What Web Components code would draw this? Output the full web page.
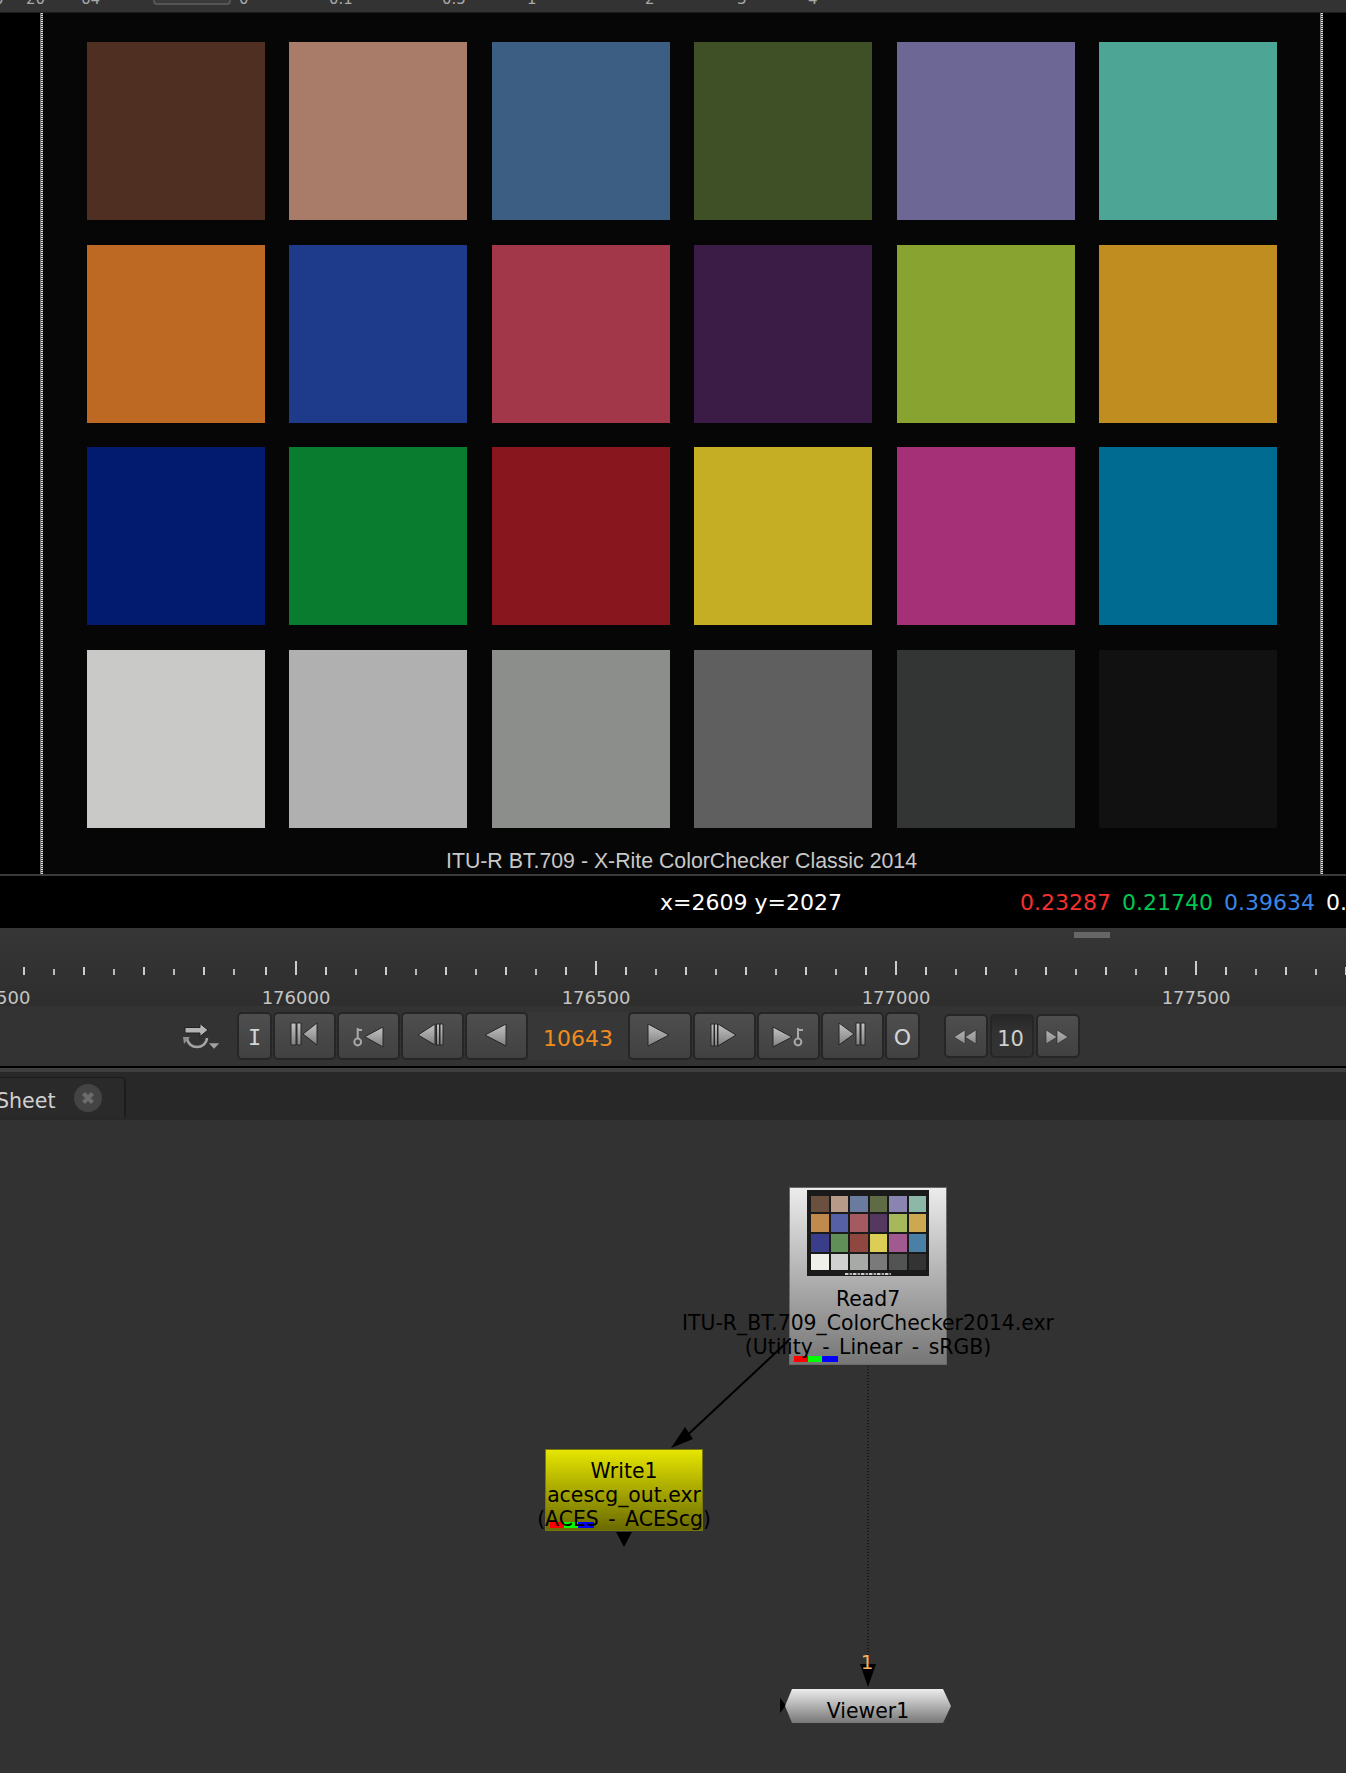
<!DOCTYPE html>
<html>
<head>
<meta charset="utf-8">
<title>Nuke viewer</title>
<style>
    html, body { margin: 0; background: #323232; }
    body { width: 1346px; height: 1773px; overflow: hidden; font-family: "DejaVu Sans", sans-serif; }
    nk-graph { height: 653px; }
</style>
</head>
<body>
<nk-top-strip></nk-top-strip>
<nk-viewer></nk-viewer>
<nk-info></nk-info>
<nk-ruler></nk-ruler>
<nk-transport></nk-transport>
<nk-tabs></nk-tabs>
<nk-graph></nk-graph>

<script>
class NkTopStrip extends HTMLElement {
    constructor() {
        super();
        this.attachShadow({ mode: 'open' });
        const marks = [['0', 32, -6], ['20', 55], ['64', 72], ['', 86], ['0', 90], ['0.1', 113], ['0.5', 85], ['1', 118], ['2', 92], ['3', 71], ['4', 30]];
        this.shadowRoot.innerHTML = `
            <style>
                :host {
                    display: flex;
                    height: 12px;
                    background: #333;
                    border-bottom: 1px solid #1c1c1c;
                    overflow: hidden;
                    color: #a8a8a8;
                    font: 15px/16px "DejaVu Sans", sans-serif;
                }
                span { flex: none; margin-top: -9px; height: 16px; }
                .slider {
                    box-sizing: border-box;
                    flex: none;
                    width: 78px;
                    height: 20px;
                    margin: -15px 8px 0 0;
                    border: 2px solid #555;
                    border-radius: 4px;
                    background: #3a3a3a;
                }
            </style>
            ${marks.map(([t, w, m]) => t
                ? `<span style="width:${w}px;${m ? `margin-left:${m}px` : ''}">${t}</span>`
                : `<div class="slider"></div>`).join('')}
        `;
    }
}

const CHART = [
    '#502f23', '#a87c69', '#3c5e82', '#3f5026', '#6c6795', '#4ca595',
    '#bd6823', '#1e3a8a', '#a13748', '#3b1c46', '#89a330', '#bf8d20',
    '#021b6f', '#0a7c30', '#87161e', '#c6ae24', '#a53078', '#006b90',
    '#c9c9c7', '#b0b0b0', '#8c8e8c', '#5f5f5f', '#333534', '#111111'
];

class NkViewer extends HTMLElement {
    constructor() {
        super();
        this.attachShadow({ mode: 'open' });
        this.shadowRoot.innerHTML = `
            <style>
                :host {
                    display: flex;
                    height: 861px;
                    background: #000;
                    border-bottom: 2px solid #3a3a3a;
                }
                .edge {
                    flex: none;
                    width: 2px;
                    border-left: 1px solid #777;
                    background: repeating-linear-gradient(#e0e0e0 0 1px, #444 1px 2px);
                }
                .left { width: 40px; flex: none; }
                .chart {
                    flex: none;
                    width: 1277px;
                    background: #060606;
                    padding: 29px 0 0 44px;
                    box-sizing: border-box;
                }
                .grid {
                    display: grid;
                    grid-template-columns: repeat(6, 178px);
                    grid-auto-rows: 178px;
                    column-gap: 24.4px;
                    row-gap: 24.5px;
                }
                .caption {
                    margin: 21px 0 0 -44px;
                    width: 1277px;
                    text-align: center;
                    color: #c8c8c8;
                    font: 21.3px/24px "Liberation Sans", Arial, sans-serif;
                    white-space: nowrap;
                }
            </style>
            <div class="left"></div>
            <div class="edge"></div>
            <div class="chart">
                <div class="grid">${CHART.map(c => `<div style="background:${c}"></div>`).join('')}</div>
                <div class="caption">ITU-R BT.709 - X-Rite ColorChecker Classic 2014</div>
            </div>
            <div class="edge"></div>
        `;
    }
}

class NkInfo extends HTMLElement {
    constructor() {
        super();
        this.attachShadow({ mode: 'open' });
        this.shadowRoot.innerHTML = `
            <style>
                :host {
                    display: flex;
                    align-items: center;
                    box-sizing: border-box;
                    height: 52px;
                    padding: 2px 0 0 660px;
                    background: #000;
                    overflow: hidden;
                    color: #fff;
                    font: 22px/26px "DejaVu Sans", sans-serif;
                    white-space: nowrap;
                }
                .pos { flex: none; width: 360px; }
                .val { flex: none; width: 102px; }
                .r { color: #f5302f; }
                .g { color: #00c853; }
                .b { color: #3a86e8; }
            </style>
            <span class="pos">x=2609 y=2027</span>
            <span class="val r">0.23287</span>
            <span class="val g">0.21740</span>
            <span class="val b">0.39634</span>
            <span class="val">0.</span>
        `;
    }
}

class NkRuler extends HTMLElement {
    constructor() {
        super();
        this.attachShadow({ mode: 'open' });
        let ticks = '';
        // left of the first major mark the spacing is offset by 2px
        for (let x = 24; x <= 234; x += 30) {
            const med = (x - 24) % 60 === 0;
            ticks += `<i class="${med ? 'm' : 's'}" style="width:${x === 234 ? 32 : 30}px"></i>`;
        }
        for (let x = 266; x <= 1346; x += 30) {
            const k = (x - 296) / 30;
            const cls = k % 10 === 0 ? 'l' : (Math.abs(k) % 2 === 1 ? 'm' : 's');
            ticks += `<i class="${cls}" style="width:30px"></i>`;
        }
        const labels = ['175500', '176000', '176500', '177000', '177500'];
        this.shadowRoot.innerHTML = `
            <style>
                :host {
                    display: block;
                    height: 78px;
                    background: linear-gradient(#363636, #2e2e2e);
                    overflow: hidden;
                    color: #c4c4c4;
                    font: 18px/18px "DejaVu Sans", sans-serif;
                }
                .handle { width: 36px; height: 6px; margin: 4px 0 23px 1074px; background: #666; }
                .ticks { display: flex; align-items: flex-end; height: 14px; padding-left: 23px; }
                i { flex: none; box-sizing: border-box; display: block; }
                i::before { content: ""; display: block; width: 2px; background: #ccc; }
                i.s::before { height: 6px; background: #bbb; }
                i.m::before { height: 8px; }
                i.l::before { height: 14px; }
                .labels { display: flex; margin: 14px 0 0 -154px; width: 1800px; }
                .labels span { flex: none; width: 300px; text-align: center; }
            </style>
            <div class="handle"></div>
            <div class="ticks">${ticks}</div>
            <div class="labels">${labels.map(l => `<span>${l}</span>`).join('')}</div>
        `;
    }
}

const ICONS = {
    first: '<path d="M18 10h5v22h-5zM24 10h4v22h-4z"/><path d="M30 21 44 10v22z"/>',
    keyback: '<path class="key" d="M20.7 25V15M20.7 17H25"/><circle class="key" cx="20.7" cy="29" r="3.4"/><path d="M27.7 23.7 46 14v20z"/>',
    stepback: '<path d="M17 22 34 11v21z"/><path d="M35.5 11h3v21h-3zM39 11h3v21h-3z"/>',
    back: '<path d="M20 22 41 11v22z"/>',
    play: '<path d="M20 11 41 22 20 33z"/>',
    stepfwd: '<path d="M18 11h3v22h-3zM21.5 11h3v22h-3z"/><path d="M25 11 43 22 25 33z"/>',
    keyfwd: '<path d="M16 14 35 24 16 34z"/><path class="key" d="M41 25V15M41 17H46"/><circle class="key" cx="41" cy="29" r="3.4"/>',
    last: '<path d="M18 10 33 21 18 32z"/><path d="M35 10h4v22h-4zM40 10h4v22h-4z"/>',
    rew: '<path d="M10 22 21 15v14zM21 22 32 15v14z"/>',
    fwd: '<path d="M10 15 21 22 10 29zM21 15 32 22 21 29z"/>'
};

class NkBtn extends HTMLElement {
    constructor() {
        super();
        this.attachShadow({ mode: 'open' });
        const icon = this.getAttribute('icon');
        const dim = icon === 'rew' || icon === 'fwd';
        const w = parseInt(this.getAttribute('w'), 10);
        const h = dim ? 44 : 48;
        this.shadowRoot.innerHTML = `
            <style>
                :host {
                    display: flex;
                    flex: none;
                    box-sizing: border-box;
                    align-items: center;
                    justify-content: center;
                    border: 2px solid #262626;
                    border-radius: 5px;
                    background: linear-gradient(#4e4e4e, #414141);
                    color: #d4d4d4;
                    font: 22px/24px "DejaVu Sans", sans-serif;
                }
                slot { display: block; padding-top: 3px; }
                svg { display: block; flex: none; margin: -1px -2px -3px; }
                .key { fill: none; stroke: #a8a8a8; stroke-width: 2; }
                path:not(.key) { fill: url(#g); stroke: #262626; stroke-width: ${dim ? 0.6 : 1}; }
            </style>
            ${icon ? `<svg width="${w}" height="${h}" viewBox="0 0 ${w} ${h}">
                <defs><linearGradient id="g" x1="0" y1="0" x2="0" y2="1">
                    <stop offset="0" stop-color="${dim ? '#b4b4b4' : '#c4c4c4'}"/>
                    <stop offset="1" stop-color="${dim ? '#8a8a8a' : '#808080'}"/>
                </linearGradient></defs>${ICONS[icon]}</svg>` : '<slot></slot>'}
        `;
        this.style.width = w + 'px';
        this.style.height = h + 'px';
        if (dim) this.style.marginTop = '2px';
    }
}

class NkTransport extends HTMLElement {
    constructor() {
        super();
        this.attachShadow({ mode: 'open' });
        this.shadowRoot.innerHTML = `
            <style>
                :host {
                    display: flex;
                    align-items: flex-start;
                    box-sizing: border-box;
                    height: 60px;
                    padding: 6px 0 0 182px;
                    background: #333;
                }
                .loop { flex: none; display: block; margin: 11px 17px 0 0; }
                .mono { font-family: "DejaVu Sans Mono", monospace; }
                .frame {
                    flex: none;
                    width: 100px;
                    height: 48px;
                    text-align: center;
                    background: #373737;
                    color: #f08c1e;
                    font: 22px/54px "DejaVu Sans", sans-serif;
                }
                nk-btn + nk-btn { margin-left: 1px; }
                .gap { flex: none; width: 24px; }
                .step {
                    flex: none;
                    box-sizing: border-box;
                    width: 44px;
                    height: 44px;
                    margin: 2px 2px 0 2px;
                    padding-right: 3px;
                    border: 2px solid #262626;
                    border-radius: 5px;
                    background: linear-gradient(#272727, #323232 40%);
                    color: #cfcfcf;
                    text-align: center;
                    font: 21px/46px "DejaVu Sans", sans-serif;
                }
            </style>
            <svg class="loop" width="38" height="26" viewBox="0 0 38 26">
                <path d="M3 4.5h15V0.5L26 7l-8 6.5V10H3z" fill="#b4b4b4" stroke="#222" stroke-width="1"/>
                <path d="M5 15c1 12 19 12 20 0" fill="none" stroke="#a4a4a4" stroke-width="2.6"/>
                <path d="M1 14h7l-6 7z" fill="#8e8e8e"/>
                <path d="M27 20.3h10.3L32 25.7z" fill="#a0a0a0"/>
            </svg>
            <nk-btn w="35"><span class="mono">I</span></nk-btn>
            <nk-btn icon="first" w="63"></nk-btn>
            <nk-btn icon="keyback" w="63"></nk-btn>
            <nk-btn icon="stepback" w="63"></nk-btn>
            <nk-btn icon="back" w="63"></nk-btn>
            <div class="frame">10643</div>
            <nk-btn icon="play" w="64"></nk-btn>
            <nk-btn icon="stepfwd" w="63"></nk-btn>
            <nk-btn icon="keyfwd" w="63"></nk-btn>
            <nk-btn icon="last" w="63"></nk-btn>
            <nk-btn w="35">O</nk-btn>
            <div class="gap"></div>
            <nk-btn icon="rew" w="44"></nk-btn>
            <div class="step">10</div>
            <nk-btn icon="fwd" w="44"></nk-btn>
        `;
    }
}

class NkTabs extends HTMLElement {
    constructor() {
        super();
        this.attachShadow({ mode: 'open' });
        this.shadowRoot.innerHTML = `
            <style>
                :host {
                    display: block;
                    height: 54px;
                    box-sizing: border-box;
                    background: #000;
                    padding-top: 2px;
                    overflow: hidden;
                }
                .rule { height: 4px; background: #3f3f3f; }
                .bar { box-sizing: border-box; height: 48px; padding-top: 5px; background: #282828; }
                .tab {
                    box-sizing: border-box;
                    display: flex;
                    align-items: center;
                    width: 126px;
                    height: 40px;
                    background: #2a2a2a;
                    border: 1px solid #1c1c1c;
                    border-width: 1px 2px 0 0;
                    border-radius: 0 5px 0 0;
                    color: #d0d0d0;
                    font: 20.6px/24px "DejaVu Sans", sans-serif;
                }
                .tab span { flex: none; margin: 6px 0 0 -4px; width: 78px; }
                svg { display: block; flex: none; margin-top: 1px; }
            </style>
            <div class="rule"></div>
            <div class="bar">
                <div class="tab">
                    <span>Sheet</span>
                    <svg width="28" height="28" viewBox="0 0 28 28">
                        <circle cx="14" cy="14" r="14" fill="#444"/>
                        <path d="M9.5 9.5l9 9M18.5 9.5l-9 9" stroke="#6c6c6c" stroke-width="4"/>
                    </svg>
                </div>
            </div>
        `;
    }
}

const THUMB = [
    '#6b5040', '#b89a88', '#6b7ba0', '#5f6b45', '#8a85b0', '#8cb8a8',
    '#c08a4c', '#5560a5', '#a55a62', '#553860', '#a5b85c', '#cca850',
    '#3a3d8a', '#609058', '#8e4840', '#dccd55', '#a05a90', '#4a80a5',
    '#f0f0ea', '#d0d0d0', '#a8aaa8', '#7a7a7a', '#525454', '#333333'
];

class NkThumb extends HTMLElement {
    constructor() {
        super();
        this.attachShadow({ mode: 'open' });
        this.shadowRoot.innerHTML = `
            <style>
                :host {
                    display: block;
                    box-sizing: border-box;
                    width: 122px;
                    height: 86px;
                    padding: 6px 4px 0;
                    background: #1a1a1a;
                }
                .grid {
                    display: grid;
                    grid-template-columns: repeat(6, 17.5px);
                    grid-template-rows: 16px 18px 18px 16px;
                    column-gap: 2px;
                    row-gap: 2px;
                }
                .noise {
                    width: 46px;
                    height: 2px;
                    margin: 3px 0 0 34px;
                    background: repeating-linear-gradient(90deg, #ccc 0 3px, #666 3px 5px, #aaa 5px 7px, #333 7px 8px);
                }
            </style>
            <div class="grid">${THUMB.map(c => `<div style="background:${c}"></div>`).join('')}</div>
            <div class="noise"></div>
        `;
    }
}

class NkNode extends HTMLElement {
    constructor() {
        super();
        this.attachShadow({ mode: 'open' });
        this.shadowRoot.innerHTML = `
            <style>
                :host {
                    display: block;
                    position: absolute;
                    box-sizing: border-box;
                    border: 1px solid #6a6a6a;
                    background: linear-gradient(#ececec, #767676);
                    color: #000;
                    font: 20.4px/24px "DejaVu Sans", sans-serif;
                    word-spacing: 3px;
                }
                :host([kind="write"]) {
                    border-color: #77770a;
                    background: linear-gradient(#e6e600, #6a6a00);
                }
                :host([kind="viewer"]) {
                    border: 0;
                    background: linear-gradient(#ececec, #777);
                    clip-path: polygon(0 50%, 7px 0, calc(100% - 8px) 0, 100% 50%, calc(100% - 8px) 100%, 7px 100%);
                }
                .thumb { display: flex; justify-content: center; margin: 2px 0 11px; }
                .bars { display: flex; position: absolute; left: 4px; bottom: 2px; height: 6px; }
                .bars i { display: block; width: 14px; }
                .bars i:nth-child(3) { width: 16px; }
                .label {
                    position: relative;
                    display: flex;
                    flex-direction: column;
                    align-items: center;
                    white-space: nowrap;
                }
                :host([kind="write"]) .label { padding-top: 9px; }
                :host([kind="viewer"]) .label { padding-top: 10px; }
                ::slotted(span) { display: block; }
            </style>
            <div class="thumb"><slot name="thumb"></slot></div>
            <div class="bars" part="bars"></div>
            <div class="label"><slot></slot></div>
        `;
        if (this.hasAttribute('bars')) {
            this.shadowRoot.querySelector('.bars').innerHTML =
                '<i style="background:#f00"></i><i style="background:#0f0"></i><i style="background:#00f"></i>';
        }
        if (this.getAttribute('kind') !== 'read') {
            this.shadowRoot.querySelector('.thumb').style.display = 'none';
        }
    }
}

class NkGraph extends HTMLElement {
    constructor() {
        super();
        this.attachShadow({ mode: 'open' });
        this.shadowRoot.innerHTML = `
            <style>
                :host {
                    display: block;
                    position: relative;
                    background: #323232;
                    overflow: hidden;
                }
                svg { position: absolute; left: 0; top: 0; }
                .pipe-num {
                    position: absolute;
                    left: 858px;
                    top: 530px;
                    width: 18px;
                    text-align: center;
                    color: #f0b060;
                    font: 20px/24px "DejaVu Sans", sans-serif;
                }
            </style>
            <svg width="1346" height="653" viewBox="0 1120 1346 653">
                <path d="M681 1441 800 1330" stroke="#000" stroke-width="2" fill="none"/>
                <path d="M671 1448 685 1427 693 1439z" fill="#000"/>
                <path d="M868 1366V1664" stroke="#000" stroke-width="1" stroke-dasharray="1 2" fill="none"/>
                <path d="M860 1664H876L868 1687z" fill="#000"/>
                <path d="M616 1532H632L624 1547z" fill="#000"/>
                <path d="M780 1698V1713L786 1705.5z" fill="#000"/>
            </svg>
            <nk-node kind="read" bars style="left:789px;top:67px;width:158px;height:178px">
                <nk-thumb slot="thumb"></nk-thumb>
                <span>Read7</span>
                <span>ITU-R_BT.709_ColorChecker2014.exr</span>
                <span>(Utility - Linear - sRGB)</span>
            </nk-node>
            <nk-node kind="write" bars style="left:545px;top:329px;width:158px;height:82px">
                <span>Write1</span>
                <span>acescg_out.exr</span>
                <span>(ACES - ACEScg)</span>
            </nk-node>
            <nk-node kind="viewer" style="left:785px;top:569px;width:166px;height:34px">
                <span>Viewer1</span>
            </nk-node>
            <div class="pipe-num">1</div>
        `;
    }
}

customElements.define('nk-top-strip', NkTopStrip);
customElements.define('nk-viewer', NkViewer);
customElements.define('nk-info', NkInfo);
customElements.define('nk-ruler', NkRuler);
customElements.define('nk-btn', NkBtn);
customElements.define('nk-transport', NkTransport);
customElements.define('nk-tabs', NkTabs);
customElements.define('nk-thumb', NkThumb);
customElements.define('nk-node', NkNode);
customElements.define('nk-graph', NkGraph);
</script>
</body>
</html>
